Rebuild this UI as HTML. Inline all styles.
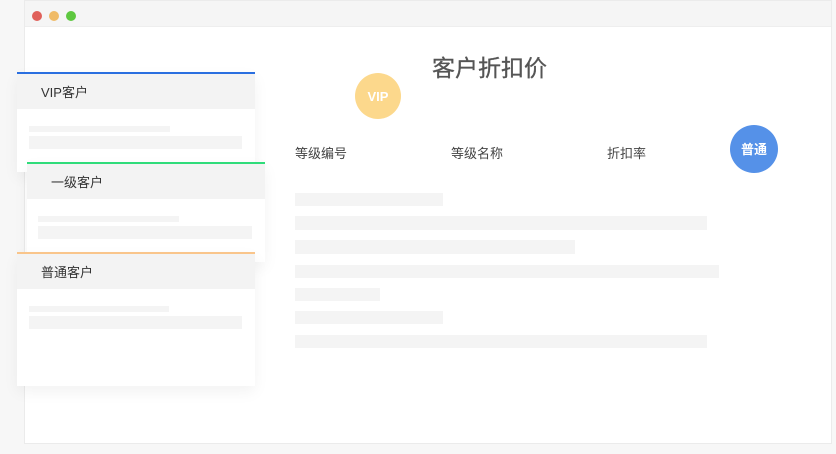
<!DOCTYPE html>
<html><head><meta charset="utf-8"><style>
*{margin:0;padding:0;box-sizing:border-box}
body{width:836px;height:454px;background:#f7f7f7;position:relative;overflow:hidden;font-family:"Liberation Sans","Noto Sans CJK SC",sans-serif}
.win{position:absolute;left:24px;top:0;width:808px;height:444px;background:#fff;border:1px solid #ebebeb}
.bar{position:absolute;left:0;top:0;width:100%;height:26px;background:#f5f5f5;border-bottom:1px solid #eee}
.dot{position:absolute;top:10px;width:10px;height:10px;border-radius:50%}
.abs{position:absolute}
.g{position:absolute;background:#f4f4f4}
.card{position:absolute;width:238px;background:#fff;box-shadow:0 6px 14px rgba(0,0,0,.05)}
.card .h{height:35px;background:#f3f3f3;font-size:13px;color:#333;line-height:38px;padding-left:24px}
.circ{position:absolute;border-radius:50%;color:#fff;font-weight:bold;text-align:center}
.lab{position:absolute;top:143px;font-size:13px;color:#444}
</style></head><body>
<div class="win">
<div class="bar"><div class="dot" style="left:7px;background:#e0605a"></div><div class="dot" style="left:24px;background:#f0bb67"></div><div class="dot" style="left:41px;background:#5ec840"></div></div>
</div>
<div class="abs" style="left:432px;top:49px;font-size:23px;color:#555;-webkit-text-stroke:0.3px #555">客户折扣价</div>
<div class="circ" style="left:355px;top:73px;width:46px;height:46px;line-height:48px;background:#fcd88c;font-size:13px">VIP</div>
<div class="circ" style="left:730px;top:125px;width:48px;height:48px;line-height:50px;background:#5591e8;font-size:13px">普通</div>
<div class="lab" style="left:295px">等级编号</div>
<div class="lab" style="left:451px">等级名称</div>
<div class="lab" style="left:607px">折扣率</div>
<div class="g" style="left:295px;top:193px;width:148px;height:13px"></div>
<div class="g" style="left:295px;top:216px;width:412px;height:14px"></div>
<div class="g" style="left:295px;top:240px;width:280px;height:14px"></div>
<div class="g" style="left:295px;top:265px;width:424px;height:13px"></div>
<div class="g" style="left:295px;top:288px;width:85px;height:13px"></div>
<div class="g" style="left:295px;top:311px;width:148px;height:13px"></div>
<div class="g" style="left:295px;top:335px;width:412px;height:13px"></div>

<div class="card" style="left:17px;top:72px;height:100px;border-top:2px solid #2a6fe0"><div class="h">VIP客户</div>
<div class="g" style="left:12px;top:52px;width:141px;height:6px"></div><div class="g" style="left:12px;top:62px;width:213px;height:13px"></div></div>
<div class="card" style="left:27px;top:162px;height:100px;border-top:2px solid #2fdc7a"><div class="h">一级客户</div>
<div class="g" style="left:11px;top:52px;width:141px;height:6px"></div><div class="g" style="left:11px;top:62px;width:214px;height:13px"></div></div>
<div class="card" style="left:17px;top:252px;height:134px;border-top:2px solid #f9c58b"><div class="h">普通客户</div>
<div class="g" style="left:12px;top:52px;width:140px;height:6px"></div><div class="g" style="left:12px;top:62px;width:213px;height:13px"></div></div>
</body></html>
